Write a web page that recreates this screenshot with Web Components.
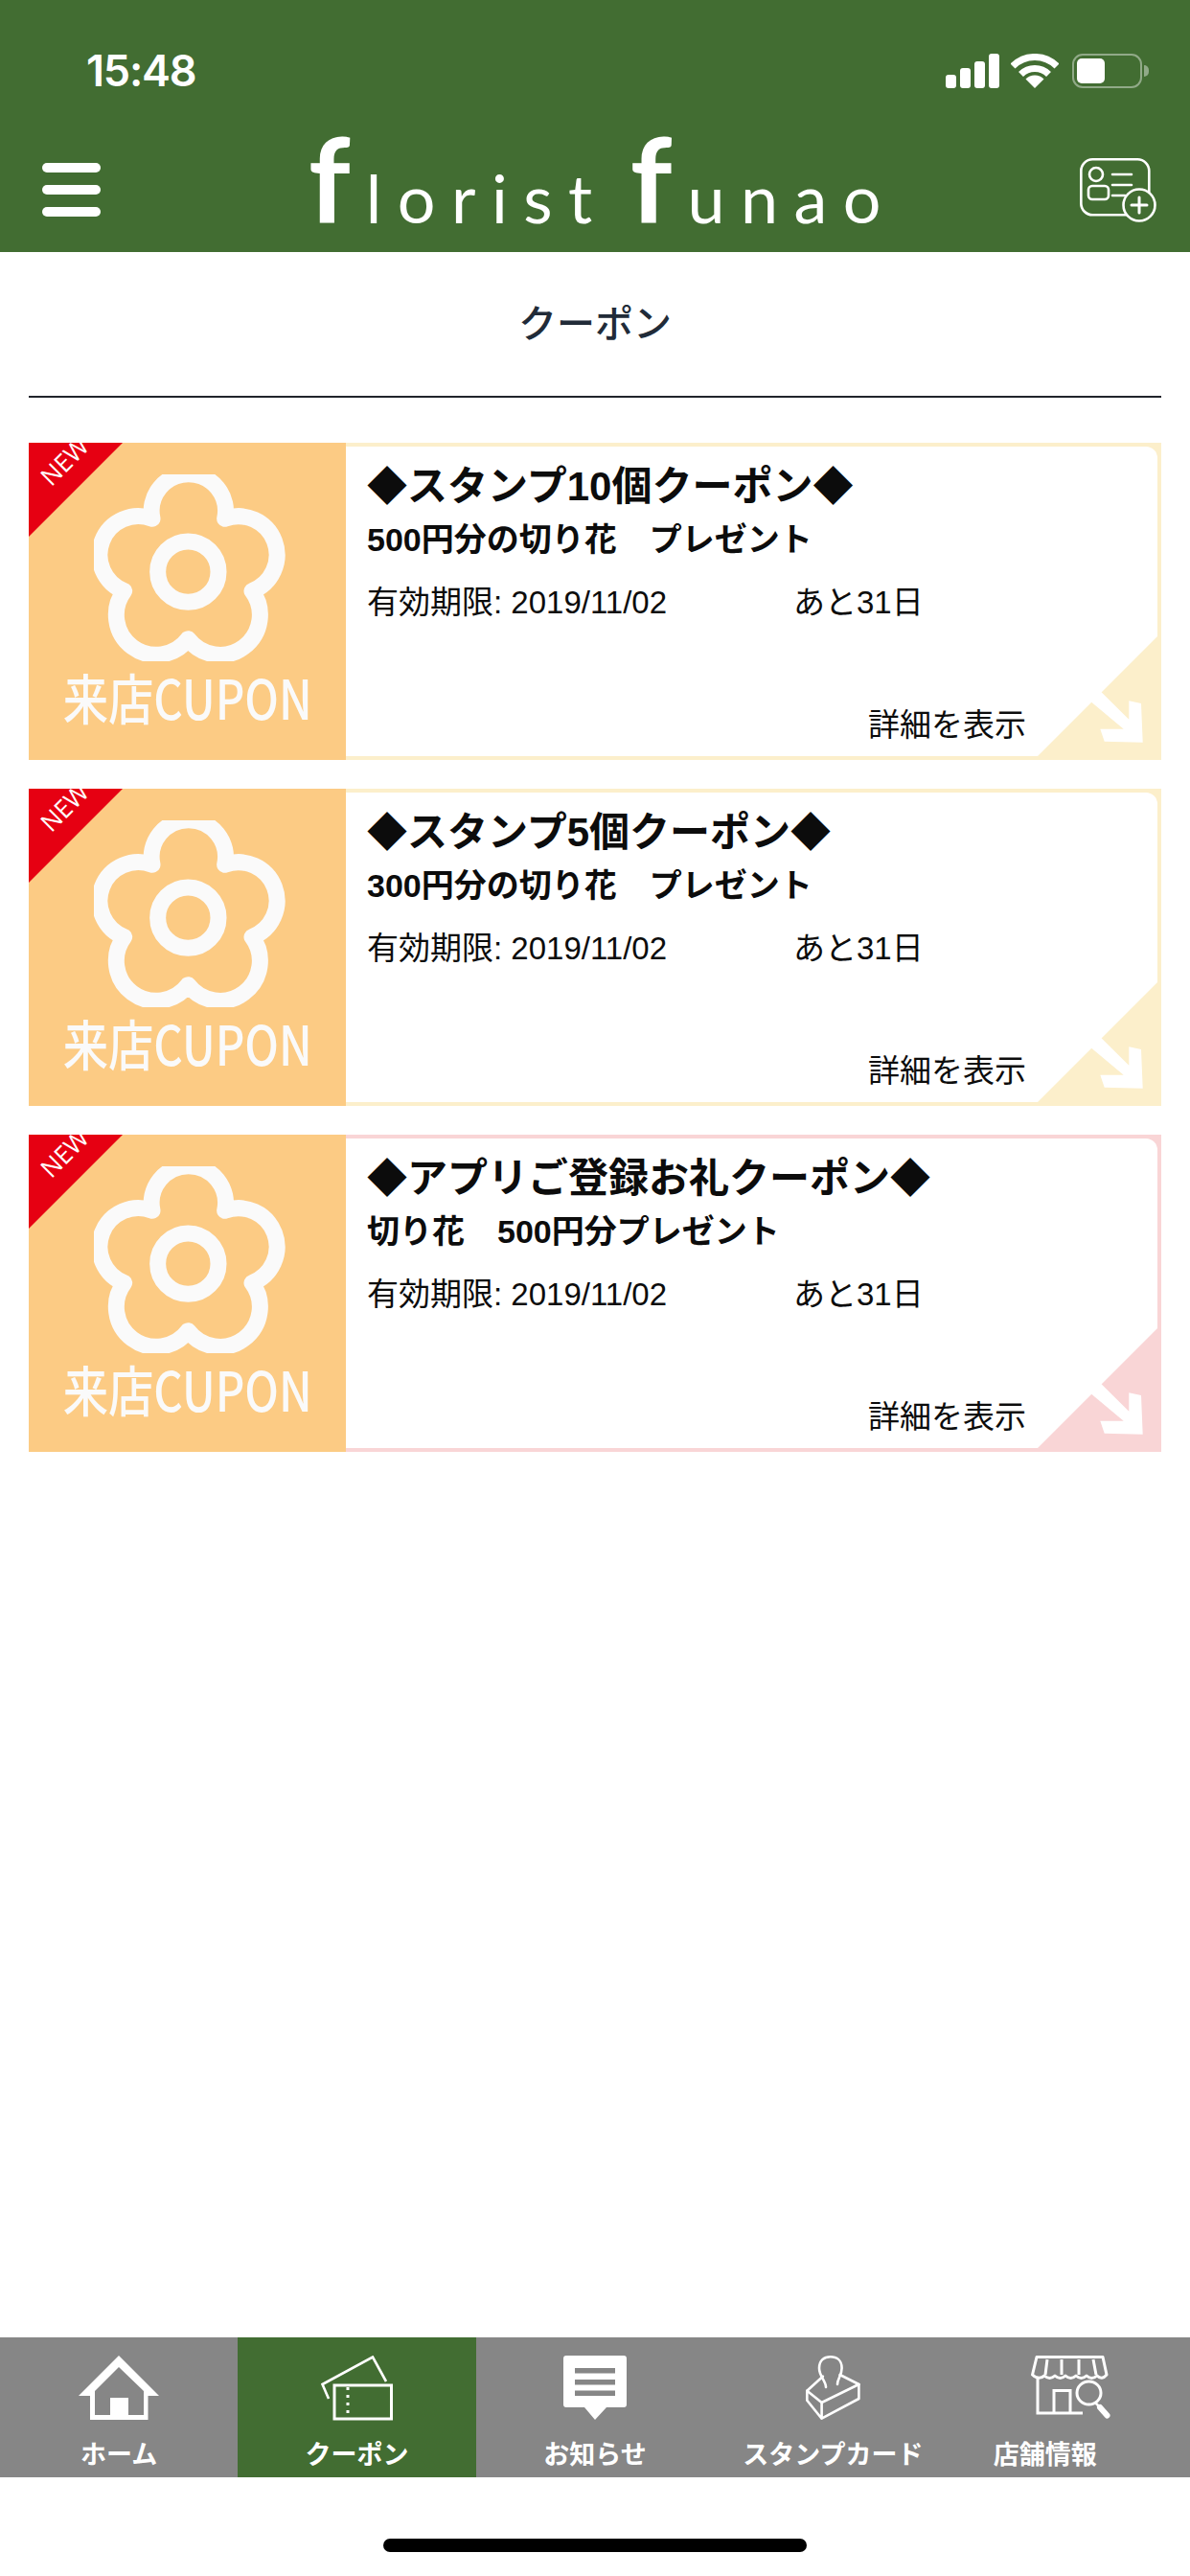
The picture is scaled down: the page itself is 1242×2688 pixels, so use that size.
<!DOCTYPE html>
<html lang="ja">
<head>
<meta charset="utf-8">
<title>クーポン</title>
<style>
html,body{margin:0;padding:0;background:#fff;}
body{font-family:"Liberation Sans","Noto Sans CJK JP",sans-serif;}
app-shell{--green:#426d32;}
</style>
</head>
<body>
<app-shell>
  <app-header slot="top"></app-header>
  <page-title>クーポン</page-title>
  <coupon-list>
    <coupon-card tone="yellow">
      <span slot="title">◆スタンプ10個クーポン◆</span>
      <span slot="sub">500円分の切り花　プレゼント</span>
      <span slot="date">有効期限: 2019/11/02</span>
      <span slot="left">あと31日</span>
    </coupon-card>
    <coupon-card tone="yellow">
      <span slot="title">◆スタンプ5個クーポン◆</span>
      <span slot="sub">300円分の切り花　プレゼント</span>
      <span slot="date">有効期限: 2019/11/02</span>
      <span slot="left">あと31日</span>
    </coupon-card>
    <coupon-card tone="pink">
      <span slot="title">◆アプリご登録お礼クーポン◆</span>
      <span slot="sub">切り花　500円分プレゼント</span>
      <span slot="date">有効期限: 2019/11/02</span>
      <span slot="left">あと31日</span>
    </coupon-card>
  </coupon-list>
  <tab-bar slot="bottom">
    <tab-item label="ホーム">
      <svg width="84" height="67" viewBox="0 0 84 67"><path fill="#fff" fill-rule="evenodd" d="M42 0 84 42H72.5V67H12V42H0ZM42 12 17 37V62H33V44H52V62H68V37Z"/></svg>
    </tab-item>
    <tab-item label="クーポン" active>
      <svg width="76" height="68" viewBox="0 0 76 68" fill="none" stroke="#fff"><path stroke-width="2.6" d="M8 45 1.5 30 54 1.5 68 27"/><rect x="14" y="31" width="59.5" height="35" stroke-width="3"/><path stroke-width="3" stroke-dasharray="3 5" d="M28 33V65"/></svg>
    </tab-item>
    <tab-item label="お知らせ">
      <svg width="66" height="67" viewBox="0 0 66 67"><path fill="#fff" d="M3 0H63a3 3 0 0 1 3 3V51a3 3 0 0 1-3 3H45L33 67 22 54H3a3 3 0 0 1-3-3V3a3 3 0 0 1 3-3Z"/><path fill="#868686" d="M12 13H54V18.500H12ZM12 25H54V30.500H12ZM12 36.500H54V42H12Z"/></svg>
    </tab-item>
    <tab-item label="スタンプカード">
      <svg width="57" height="67" viewBox="0 0 57 67" fill="none" stroke="#fff" stroke-width="2.6" stroke-linejoin="round" stroke-linecap="round"><path d="M21 33C21 26 14 22 14 13 14 5 19 1.300 25.700 1.300S37.600 5 37.600 13C37.600 21 33 24 33 30"/><path d="M17.800 21.700 1.300 36.700 16.600 49 55.400 30 35.600 20"/><path d="M1.300 36.700V46.700L16.600 65.700 55.400 45V30M16.600 49V65.700"/></svg>
    </tab-item>
    <tab-item label="店舗情報" style="--label-shift:54px">
      <svg width="84" height="67" viewBox="0 0 84 67" fill="none" stroke="#fff" stroke-width="3"><path stroke-linejoin="round" d="M6 1.500H75L79 20Q74 26 69 21 63.500 26 58 21 52.500 26 47 21 41.500 26 36 21 30.500 26 25 21 19.500 26 14 21 8 26 1.500 20Z"/><path d="M17 4 15 20M32 4V20M50 4V20M65 4 68 20"/><path d="M7 24V60H54M24 60V36.500H41V60"/><ellipse cx="60.500" cy="39" rx="12.500" ry="12"/><path stroke-width="6" stroke-linecap="round" d="M72 54 79.500 62.500"/><path stroke-width="2.500" d="M67 49 72 54"/></svg>
    </tab-item>
  </tab-bar>
  <home-indicator slot="bottom"></home-indicator>
</app-shell>

<script>
function def(name, css, html, setup){
  customElements.define(name, class extends HTMLElement{
    constructor(){
      super();
      const r=this.attachShadow({mode:"open"});
      r.innerHTML="<style>"+css+"</style>"+(typeof html==="function"?html(this):html);
    }
    connectedCallback(){ if(setup) setup(this); }
  });
}
const JP='"Liberation Sans","Noto Sans CJK JP",sans-serif';

def("app-shell",`
  :host{display:flex;flex-direction:column;width:1242px;height:2688px;overflow:hidden;background:#fff;font-family:${JP};}
  main{flex:1;display:flex;flex-direction:column;min-height:0;}
`,`<slot name="top"></slot><main><slot></slot></main><slot name="bottom"></slot>`);

def("app-header",`
  :host{display:block;background:#426d32;height:263px;color:#fff;}
  .status{display:flex;justify-content:space-between;align-items:flex-start;height:130px;box-sizing:border-box;padding:46px 50px 0 90px;}
  .time{font:600 45px/56px Inter,"Liberation Sans",sans-serif;letter-spacing:-1.2px;}
  .sys{display:flex;align-items:flex-start;gap:12px;padding-top:10px;}
  .sig{display:flex;align-items:flex-end;gap:4px;height:36px;margin-right:0;}
  .sig i{display:block;width:11px;background:#fff;border-radius:3px;}
  .bat{position:relative;box-sizing:border-box;width:73px;height:36px;border:2.500px solid rgba(255,255,255,.42);border-radius:11px;padding:3px;margin-left:2px;}
  .bat b{display:block;width:29px;height:100%;background:#fff;border-radius:5px;}
  .bat::after{content:"";position:absolute;right:-9px;top:10px;width:5px;height:12px;background:rgba(255,255,255,.42);border-radius:0 6px 6px 0;}
  .nav{display:grid;grid-template-columns:1fr auto 1fr;height:133px;}
  .menu{display:flex;flex-direction:column;gap:13px;padding:40px 0 0 44px;}
  .menu i{display:block;width:61px;height:10px;background:#fff;border-radius:5px;}
  .logo{font:400 70px/1 Lato,sans-serif;letter-spacing:16.500px;white-space:pre;height:113px;display:flex;align-items:baseline;padding-top:0;margin-right:-16px;}
  .logo b{font:700 122px/113px Lato,sans-serif;letter-spacing:16px;}
  .logo .gap{display:inline-block;width:23px;}
  .add{justify-self:end;padding:35px 34px 0 0;}
`,`
  <div class="status">
    <span class="time">15:48</span>
    <div class="sys">
      <div class="sig"><i style="height:14px"></i><i style="height:21px"></i><i style="height:28px"></i><i style="height:36px"></i></div>
      <svg width="50" height="36" viewBox="0 0 50 36" fill="none" stroke="#fff" stroke-width="7"><path d="M2 13A32.500 32.500 0 0 1 48 13"/><path d="M10.500 21.500A20.500 20.500 0 0 1 39.500 21.500"/><path fill="#fff" stroke="none" d="M25 36 15.500 26.500A13.400 13.400 0 0 1 34.500 26.500Z"/></svg>
      <div class="bat"><b></b></div>
    </div>
  </div>
  <div class="nav">
    <div class="menu"><i></i><i></i><i></i></div>
    <div class="logo"><b>f</b><span>lorist</span><span class="gap"></span><b>f</b><span>unao</span></div>
    <svg class="add" width="81" height="67" viewBox="0 0 81 67" fill="none" stroke="#fff" stroke-width="2.600" stroke-linecap="round" style="box-sizing:content-box">
      <rect x="1.300" y="1.300" width="71" height="58" rx="12"/>
      <circle cx="17" cy="17" r="7"/><rect x="9" y="29" width="21" height="14" rx="4"/>
      <path d="M34 17H54M34 28H54M34 39H47"/>
      <circle cx="62" cy="49" r="16.500" fill="#426d32"/><path stroke-width="3" d="M62 41V57M54 49H70"/>
    </svg>
  </div>
`);

def("page-title",`
  :host{display:block;margin:0 30px;height:152px;box-sizing:border-box;border-bottom:2px solid #20242b;text-align:center;
    font:500 40px/150px ${JP};color:#212b38;padding-bottom:0;}
  div{height:150px;line-height:150px;}
`,`<div><slot></slot></div>`);

def("coupon-list",`
  :host{display:flex;flex-direction:column;gap:30px;padding:47px 30px 0;}
`,`<slot></slot>`);

def("coupon-card",`
  :host{display:flex;height:331px;position:relative;color:#0c0c0c;--tone:#fcefcb;}
  :host([tone=pink]){--tone:#f9d5d6;}
  .thumb{position:relative;flex:none;width:331px;height:331px;background:#fccb84;overflow:hidden;display:flex;flex-direction:column;align-items:center;}
  .new{position:absolute;left:0;top:0;width:98px;height:98px;background:#e60012;clip-path:polygon(0 0,100% 0,0 100%);}
  .new span{position:absolute;left:-13px;top:3px;width:100px;text-align:center;transform:rotate(-45deg);font:400 26px/32px "Open Sans",sans-serif;color:#fff;}
  .flower{display:block;margin:33px 0 0 5px;flex:none;}
  .cap{flex:none;margin-top:6px;font:500 57px/60px "Noto Sans CJK JP",sans-serif;color:#fafafa;white-space:nowrap;transform:scaleX(.83);}
  .body{flex:1;min-width:0;background:var(--tone);padding:4px 4px 4px 0;position:relative;}
  .inner{box-sizing:border-box;height:100%;background:#fff;border-radius:0 12px 0 0;padding:17px 0 10px 22px;display:flex;flex-direction:column;}
  .t{font:700 42px/50px ${JP};white-space:nowrap;}
  .s{font:700 34px/44px ${JP};margin-top:8px;white-space:nowrap;}
  .d{font:400 33px/44px ${JP};margin-top:22px;display:flex;white-space:nowrap;}
  .d .a{width:445px;flex:none;}
  .m{font:400 33px/44px ${JP};margin-top:auto;align-self:flex-end;padding-right:137px;position:relative;z-index:1;}
  .corner{position:absolute;right:0;bottom:0;display:block;}
`,`
  <div class="thumb">
    <svg class="flower" width="200" height="195" viewBox="295 133 600 585" fill="none" stroke="#fafafa" stroke-width="51" stroke-linejoin="round">
      <path d="M478 272A116 116 0 1 1 705 272A118 118 0 1 1 790 498A122 122 0 1 1 590 648A122 122 0 1 1 390 498A118 118 0 1 1 478 272Z"/>
      <circle cx="590" cy="438" r="95"/>
    </svg>
    <div class="cap">来店CUPON</div>
    <div class="new"><span>NEW</span></div>
  </div>
  <div class="body">
    <div class="inner">
      <div class="t"><slot name="title"></slot></div>
      <div class="s"><slot name="sub"></slot></div>
      <div class="d"><span class="a"><slot name="date"></slot></span><span><slot name="left"></slot></span></div>
      <div class="m">詳細を表示</div>
    </div>
    <svg class="corner" width="133" height="133" viewBox="0 0 133 133">
      <path fill="var(--tone)" d="M133 0V133H0Z"/>
      <path fill="#fff" d="M59.300 72 70.300 62 99.300 90.700V71.300L112 74 113.700 114.700 73.700 113.700 69.300 100.700H93.700Z"/>
    </svg>
  </div>
`);

def("tab-bar",`
  :host{display:flex;height:146px;margin-top:0;background:#868686;flex:none;}
  ::slotted(tab-item){flex:1 1 0;min-width:0;}
`,`<slot></slot>`);

def("tab-item",`
  :host{display:flex;flex-direction:column;align-items:center;padding-top:19px;box-sizing:border-box;color:#fff;}
  :host([active]){background:#426d32;}
  .i{height:67px;display:flex;justify-content:center;align-items:flex-start;}
  .l{margin-top:21px;font:700 27px/32px ${JP};white-space:nowrap;margin-right:var(--label-shift,0);}
`,el=>`<div class="i"><slot></slot></div><div class="l">${el.getAttribute("label")||""}</div>`);

def("home-indicator",`
  :host{display:flex;justify-content:center;align-items:flex-start;height:103px;padding-top:64px;box-sizing:border-box;background:#fff;flex:none;}
  i{display:block;width:442px;height:14px;border-radius:7px;background:#000;}
`,`<i></i>`);
</script>
</body>
</html>
